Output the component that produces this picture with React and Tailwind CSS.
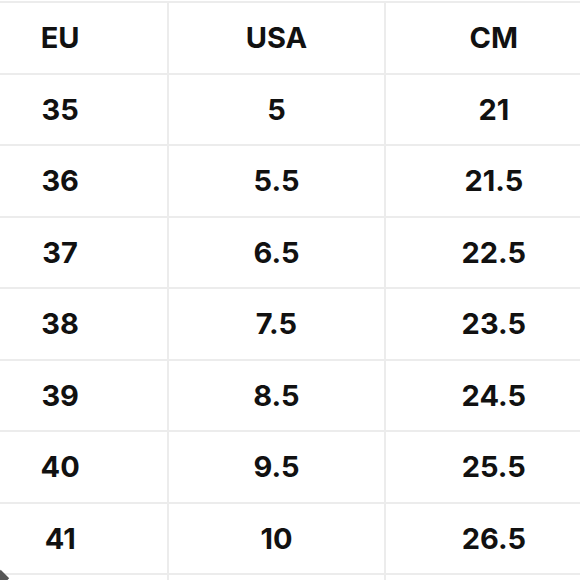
import React from 'react';

const rows = [
  ['EU', 'USA', 'CM'],
  ['35', '5', '21'],
  ['36', '5.5', '21.5'],
  ['37', '6.5', '22.5'],
  ['38', '7.5', '23.5'],
  ['39', '8.5', '24.5'],
  ['40', '9.5', '25.5'],
  ['41', '10', '26.5'],
  ['', '', ''],
];

const App = () => {
  return (
    <div className="relative w-[580px] h-[580px] overflow-hidden bg-white">
      <div className="ml-[-47px] w-[649px] pt-px" style={{ fontFamily: 'Inter, "Liberation Sans", sans-serif' }}>
        <div className="border-t-2 border-[#ececec]">
          {rows.map((row, i) => (
            <div key={i} className="grid grid-cols-3 h-[71.5px] border-b-2 border-[#ececec]">
              {row.map((cell, j) => (
                <div
                  key={j}
                  className={`flex items-center justify-center text-[29px] font-bold text-[#111] ${j < 2 ? 'border-r-2 border-[#ececec]' : ''}`}
                >
                  {cell}
                </div>
              ))}
            </div>
          ))}
        </div>
      </div>
      <div className="absolute left-[-6px] bottom-[-6px] w-[12px] h-[14px] rotate-45 bg-[#555]" />
    </div>
  );
};

export default App;
